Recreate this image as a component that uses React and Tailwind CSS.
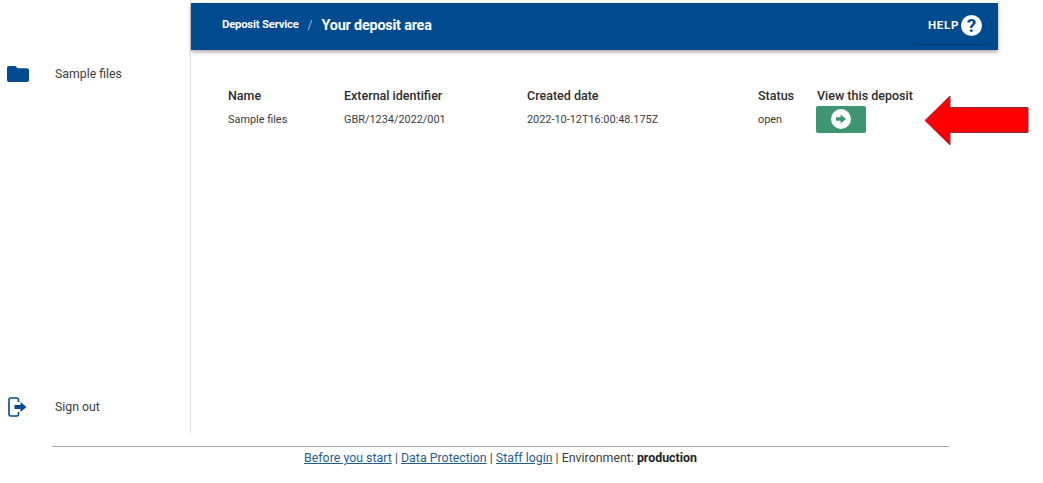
function FolderIcon() {
  return (
    <svg width="22" height="16" viewBox="0 0 22 16" className="shrink-0">
      <path
        d="M2 0h6.5l2 2.2H20a2 2 0 0 1 2 2V14a2 2 0 0 1-2 2H2a2 2 0 0 1-2-2V2a2 2 0 0 1 2-2z"
        fill="#004b8f"
      />
    </svg>
  );
}

function SignOutIcon() {
  return (
    <svg width="20" height="20" viewBox="0 0 20 20" fill="none" className="shrink-0">
      <path
        d="M10.5 5V2.6A1.6 1.6 0 0 0 9 1H2.6A1.6 1.6 0 0 0 1 2.6v14.8A1.6 1.6 0 0 0 2.6 19H9a1.6 1.6 0 0 0 1.5-1.6V15"
        stroke="#004b8f"
        strokeWidth="1.6"
      />
      <path d="M6.5 8h6V5l6 5-6 5v-3h-6z" fill="#004b8f" />
    </svg>
  );
}

function SolidArrow() {
  return (
    <svg width="10" height="10" viewBox="0 0 10 10">
      <path d="M0 3.2h4.6V.6L10 5 4.6 9.400V6.800H0z" fill="#3d9574" />
    </svg>
  );
}

function RedArrow() {
  return (
    <svg width="106" height="52" viewBox="0 0 106 52" className="absolute left-[924px] top-[95px]">
      <path d="M1 25.5 26 1v11.500h78v25H26V50z" fill="#ff0000" stroke="#8f2a3a" strokeWidth="1" />
    </svg>
  );
}

export default function App() {
  return (
    <div className="relative h-[483px] w-[1043px] overflow-hidden bg-white font-['Roboto',sans-serif] text-[12px] text-[#3c3c3c]">
      {/* Top part */}
      <div className="flex h-[433px]">
        {/* Sidebar */}
        <aside className="flex w-[191px] shrink-0 flex-col justify-between border-r border-[#dcdcdc] pb-[16px] pl-[7px] pt-[65px]">
          <div className="flex items-center gap-[26px]">
            <FolderIcon />
            <span className="text-[12.3px]">Sample files</span>
          </div>
          <div className="flex items-center gap-[27px] pl-[1px]">
            <SignOutIcon />
            <span className="text-[12.3px]">Sign out</span>
          </div>
        </aside>

        {/* Main */}
        <main className="flex-1 pt-[3px]">
          <header className="flex h-[47px] w-[807px] items-center justify-between bg-[#004b8f] pb-[2px] pl-[31px] pr-[8px] text-white shadow-[0_2px_4px_rgba(0,0,0,0.35)]">
            <div className="flex items-center">
              <span className="text-[11.3px] font-bold tracking-[-0.2px]">Deposit Service</span>
              <span className="ml-[9px] text-[12px] text-[#a9c4de]">/</span>
              <span className="ml-[9px] text-[14.4px] font-bold tracking-[-0.2px]">Your deposit area</span>
            </div>
            <div className="flex h-[36px] w-[76px] items-center justify-end gap-[2px] rounded-[3px] pr-[8px] shadow-[0_1px_1px_rgba(0,0,0,0.25)]">
              <span className="text-[11.5px] font-bold tracking-[0.7px]">HELP</span>
              <span className="flex h-[21px] w-[21px] items-center justify-center rounded-full bg-white text-[19px] font-bold leading-none text-[#004b8f]">
                ?
              </span>
            </div>
          </header>

          <table className="ml-[37px] mt-[37px] border-collapse text-left">
            <thead>
              <tr className="h-[17px] text-[12.5px] text-[#2c2c2c]">
                <th className="w-[116px] p-0 font-medium">Name</th>
                <th className="w-[183px] p-0 font-medium">External identifier</th>
                <th className="w-[231px] p-0 font-medium">Created date</th>
                <th className="w-[59px] p-0 font-medium">Status</th>
                <th className="p-0 font-medium">View this deposit</th>
              </tr>
            </thead>
            <tbody>
              <tr className="text-[10.9px]">
                <td className="p-0 pt-[2px]">Sample files</td>
                <td className="p-0 pt-[2px]">GBR/1234/2022/001</td>
                <td className="p-0 pt-[2px]">2022-10-12T16:00:48.175Z</td>
                <td className="p-0 pt-[2px]">open</td>
                <td className="p-0">
                  <button className="-ml-[1px] flex h-[27px] w-[50px] items-center justify-center rounded-[2px] bg-[#3d9574]">
                    <span className="flex h-[20px] w-[20px] items-center justify-center rounded-full bg-white">
                      <SolidArrow />
                    </span>
                  </button>
                </td>
              </tr>
            </tbody>
          </table>
        </main>
      </div>

      {/* Footer */}
      <footer className="ml-[52px] mt-[13px] w-[897px] border-t border-[#a8a8a8] pt-[2px] text-center text-[12.38px] text-[#3c3c3c]">
        <a className="text-[#1f5f8f] underline">Before you start</a> |{" "}
        <a className="text-[#1f5f8f] underline">Data Protection</a> |{" "}
        <a className="text-[#1f5f8f] underline">Staff login</a> | Environment:{" "}
        <b className="font-bold text-[#222]">production</b>
      </footer>

      <RedArrow />
    </div>
  );
}
